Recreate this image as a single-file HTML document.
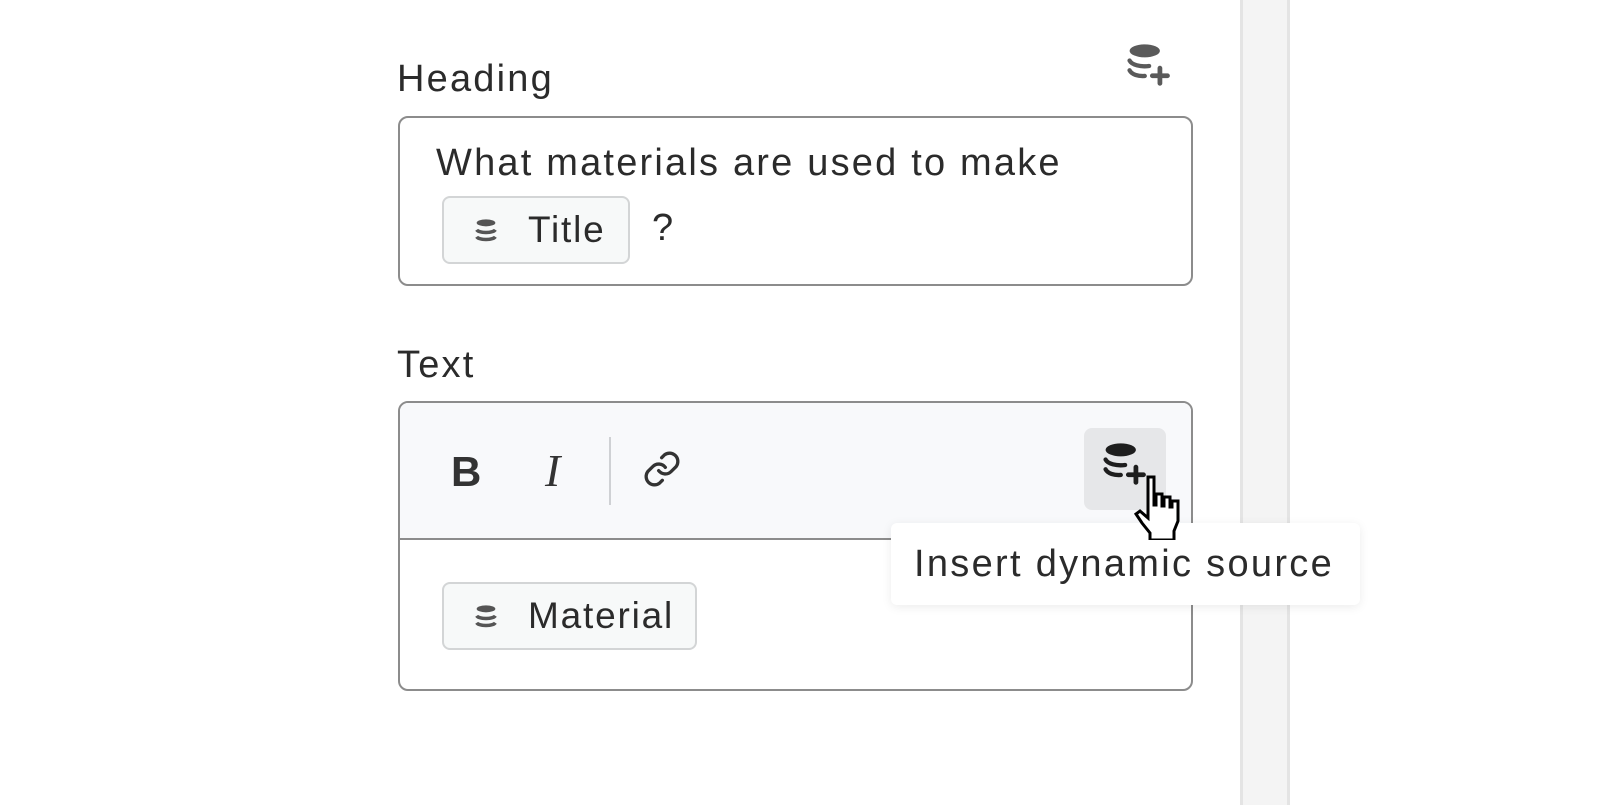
<!DOCTYPE html>
<html><head><meta charset="utf-8"><style>
*{box-sizing:border-box;margin:0;padding:0}
body{width:1606px;height:808px;background:#fff;position:relative;overflow:hidden;font-family:"Liberation Sans",sans-serif;color:#2b2b2b;font-size:38px;letter-spacing:2.2px}
.abs{position:absolute}
.lbl{position:absolute;left:397px;line-height:40px}
.box{position:absolute;left:398px;width:795px;border:2px solid #8c8c8c;border-radius:10px;background:#fff;overflow:hidden}
.chip{position:absolute;background:#f7f9f9;border:2px solid #d3d5d6;border-radius:8px;height:68px;display:flex;align-items:center}
.chip svg{position:absolute;left:28px;top:18px}
.chip span{position:absolute;left:84px;top:12px;line-height:40px;font-size:37px;letter-spacing:1.8px}
</style></head><body>
<div class="abs" style="left:1240px;top:0;width:50px;height:805px;background:#f4f4f4;border-left:3px solid #e4e4e4;border-right:3px solid #e4e4e4"></div>

<div class="lbl" style="top:59px">Heading</div>
<svg class="abs" style="left:1122px;top:40px" width="52" height="52" viewBox="0 0 24 24">
<ellipse cx="10.5" cy="5" rx="7" ry="3" fill="#5a5a5a"/>
<path d="M3.5 9.5c1 2 5 3 9 2.5M3.5 14c1 2 4 2.8 7 2.6" stroke="#5a5a5a" stroke-width="2" fill="none" stroke-linecap="round"/>
<path d="M17.5 13v7M14 16.5h7" stroke="#5a5a5a" stroke-width="2.2" stroke-linecap="round"/>
</svg>
<div class="box" style="top:116px;height:170px">
<div class="abs" style="left:36px;top:25px;line-height:40px">What materials are used to make</div>
<div class="chip" style="left:42px;top:78px;width:188px"><svg width="28" height="30" viewBox="0 0 24 24"><ellipse cx="12" cy="5" rx="8" ry="3" fill="#555"/><path d="M4 11c2 3 14 3 16 0M4 17c2 3 14 3 16 0" stroke="#555" stroke-width="3" fill="none"/></svg><span>Title</span></div>
<div class="abs" style="left:252px;top:90px;line-height:40px">?</div>
</div>

<div class="lbl" style="top:345px">Text</div>
<div class="box" style="top:401px;height:290px">
<div class="abs" style="left:0;top:0;width:100%;height:137px;background:#f8f9fb;border-bottom:2px solid #8c8c8c"></div>
<div class="abs" style="left:51px;top:47px;font-weight:bold;font-size:42px;line-height:44px;color:#333;letter-spacing:0">B</div>
<div class="abs" style="left:145px;top:46px;font-family:'Liberation Serif',serif;font-style:italic;font-size:46px;line-height:44px;color:#333;letter-spacing:0">I</div>
<div class="abs" style="left:209px;top:34px;width:2px;height:68px;background:#cfd1d4"></div>
<svg class="abs" style="left:242px;top:46px" width="40" height="40" viewBox="0 0 24 24" fill="none" stroke="#333" stroke-width="2" stroke-linecap="round"><path d="M10 13a5 5 0 0 0 7.5.5l3-3a5 5 0 0 0-7-7l-1.7 1.7"/><path d="M14 11a5 5 0 0 0-7.5-.5l-3 3a5 5 0 0 0 7 7l1.7-1.7"/></svg>
<div class="abs" style="left:684px;top:25px;width:82px;height:82px;background:#e6e7e9;border-radius:8px"></div>
<svg class="abs" style="left:698px;top:36px" width="52" height="52" viewBox="0 0 24 24">
<ellipse cx="10.5" cy="5" rx="7" ry="3" fill="#1e1e1e"/>
<path d="M3.5 9.5c1 2 5 3 9 2.5M3.5 14c1 2 4 2.8 7 2.6" stroke="#1e1e1e" stroke-width="2" fill="none" stroke-linecap="round"/>
<path d="M17.5 13v7M14 16.5h7" stroke="#1e1e1e" stroke-width="2.2" stroke-linecap="round"/>
</svg>
<div class="chip" style="left:42px;top:179px;width:255px"><svg width="28" height="30" viewBox="0 0 24 24"><ellipse cx="12" cy="5" rx="8" ry="3" fill="#555"/><path d="M4 11c2 3 14 3 16 0M4 17c2 3 14 3 16 0" stroke="#555" stroke-width="3" fill="none"/></svg><span>Material</span></div>
</div>

<div class="abs" style="left:891px;top:523px;width:469px;height:82px;background:#fff;border-radius:6px;box-shadow:0 2px 10px rgba(0,0,0,0.08)">
<div class="abs" style="left:23px;top:21px;line-height:40px;color:#2b2b2b;font-size:38px;letter-spacing:2.3px">Insert dynamic source</div>
</div>

<svg class="abs" style="left:1134px;top:474px" width="60" height="66" viewBox="0 0 29 33">
<path d="M7 1.5h2.5v14h1V10h3v6h1v-4.5h3v5h1v-3h3v10l-2 5v4.5h-12v-3.5l-4-5-3-4.5 2-1.5 4 3.5V1.5z" fill="#fff" stroke="#000" stroke-width="1.5" stroke-linejoin="miter"/>
</svg>
</body></html>
